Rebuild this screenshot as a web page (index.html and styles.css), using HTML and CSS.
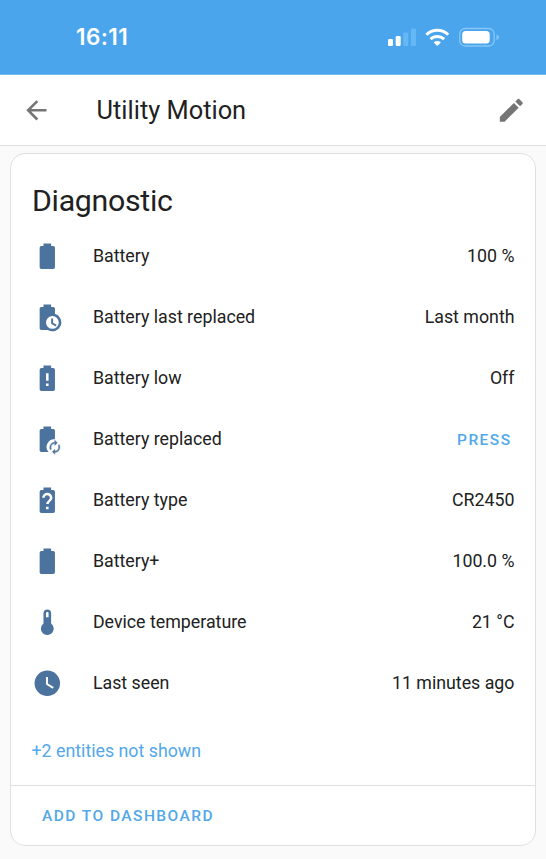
FILE: index.html
```html
<!DOCTYPE html>
<html lang="en">
<head>
<meta charset="utf-8">
<meta name="viewport" content="width=device-width">
<title>Utility Motion</title>
<link rel="stylesheet" href="styles.css">
</head>
<body>
<div class="status">
  <span class="time">16:11</span>
  <svg class="indicators" viewBox="0 0 114 24" aria-hidden="true">
    <g fill="#fff">
      <rect x="0" y="14" width="5" height="7" rx="1.3"/>
      <rect x="7.7" y="11" width="5" height="10" rx="1.3"/>
      <rect x="15.3" y="7.5" width="5" height="13.5" rx="1.3" fill="#66b8f5"/>
      <rect x="23" y="3.5" width="5" height="17.500" rx="1.3" fill="#66b8f5"/>
      <path d="M49.300 21l-3.600-3.600a5.200 5.200 0 0 1 7.200 0z"/>
      <rect x="74.200" y="6" width="27.500" height="12.500" rx="3.500"/>
      <path d="M108.500 9.500v5.500q2.500-.7 2.500-2.750t-2.500-2.750z" fill="#84c7f7"/>
    </g>
    <g fill="none" stroke="#fff" stroke-width="3">
      <path d="M38.400 9.700a15.600 15.600 0 0 1 21.800 0"/>
      <path d="M42.500 14.200a9.900 9.900 0 0 1 13.600 0"/>
    </g>
    <rect x="71.700" y="3.500" width="34.500" height="17.500" rx="5.500" fill="none" stroke="#84c7f7" stroke-width="1.300"/>
  </svg>
</div>
<header class="toolbar">
  <svg class="icon" viewBox="0 0 24 24"><path d="M20,11V13H8L13.500,18.500L12.080,19.920L4.160,12L12.080,4.080L13.500,5.500L8,11H20Z"/></svg>
  <h1>Utility Motion</h1>
  <svg class="icon" viewBox="0 0 24 24"><path d="M20.710,7.040C21.100,6.650 21.100,6 20.710,5.630L18.370,3.290C18,2.900 17.350,2.900 16.960,3.290L15.120,5.120L18.870,8.870M3,17.250V21H6.750L17.810,9.930L14.060,6.180L3,17.250Z"/></svg>
</header>
<main class="card">
  <h2>Diagnostic</h2>
  <div class="rows">
    <div class="row"><svg class="icon" viewBox="0 0 24 24"><path d="M16.670,4H15V2H9V4H7.330A1.330,1.330 0 0,0 6,5.330V20.670C6,21.400 6.600,22 7.330,22H16.670A1.330,1.330 0 0,0 18,20.670V5.330C18,4.600 17.400,4 16.670,4Z"/></svg><span class="name">Battery</span><span class="value">100 %</span></div>
    <div class="row"><svg class="icon" viewBox="0 0 24 24"><path d="M18 9.290V5.330C18 4.600 17.400 4 16.670 4H15V2H9V4H7.330C6.600 4 6 4.600 6 5.330V20.670C6 21.400 6.600 22 7.330 22H12.400A7 7 0 1 0 18 9.290M16 21A5 5 0 1 1 16 11A5 5 0 0 1 16 21M16.500 13H15V17L18.610 19.160L19.360 17.940L16.500 16.250V13Z"/></svg><span class="name">Battery last replaced</span><span class="value">Last month</span></div>
    <div class="row"><svg class="icon" viewBox="0 0 24 24"><path fill-rule="evenodd" d="M13,14H11V8H13ZM13,18H11V16H13ZM16.670,4H15V2H9V4H7.330A1.330,1.330 0 0,0 6,5.330V20.670C6,21.400 6.600,22 7.330,22H16.670A1.330,1.330 0 0,0 18,20.670V5.330C18,4.600 17.400,4 16.670,4Z"/></svg><span class="name">Battery low</span><span class="value">Off</span></div>
    <div class="row"><svg class="icon" viewBox="0 0 24 24"><path d="M18 12V5.330C18 4.600 17.400 4 16.670 4H15V2H9V4H7.330C6.600 4 6 4.600 6 5.330V20.670C6 21.400 6.600 22 7.330 22H13A6 6 0 0 1 18 12Z"/><path class="sync" transform="translate(11.900 12.300) scale(.5)" d="M12,6V9L16,5L12,1V4A8,8 0 0,0 4,12C4,13.570 4.460,15.030 5.240,16.260L6.700,14.800C6.250,13.970 6,13 6,12A6,6 0 0,1 12,6ZM18.760,7.740L17.300,9.200C17.740,10.040 18,11 18,12A6,6 0 0,1 12,18V15L8,19L12,23V20A8,8 0 0,0 20,12C20,10.430 19.540,8.970 18.760,7.740Z"/></svg><span class="name">Battery replaced</span><span class="action">Press</span></div>
    <div class="row"><svg class="icon" viewBox="0 0 24 24"><path fill-rule="evenodd" d="M15.070,12.250L14.170,13.170C13.630,13.710 13.250,14.180 13.090,15H11.050C11.160,14.100 11.560,13.280 12.170,12.670L13.410,11.410C13.780,11.050 14,10.550 14,10C14,8.890 13.100,8 12,8A2,2 0 0,0 10,10H8A4,4 0 0,1 12,6A4,4 0 0,1 16,10C16,10.880 15.640,11.680 15.070,12.250ZM13,19H11V17H13ZM16.670,4H15V2H9V4H7.330A1.330,1.330 0 0,0 6,5.330V20.670C6,21.400 6.600,22 7.330,22H16.670A1.330,1.330 0 0,0 18,20.670V5.330C18,4.600 17.400,4 16.670,4Z"/></svg><span class="name">Battery type</span><span class="value">CR2450</span></div>
    <div class="row"><svg class="icon" viewBox="0 0 24 24"><path d="M16.670,4H15V2H9V4H7.330A1.330,1.330 0 0,0 6,5.330V20.670C6,21.400 6.600,22 7.330,22H16.670A1.330,1.330 0 0,0 18,20.670V5.330C18,4.600 17.400,4 16.670,4Z"/></svg><span class="name">Battery+</span><span class="value">100.0 %</span></div>
    <div class="row"><svg class="icon" viewBox="0 0 24 24"><path fill-rule="evenodd" d="M15 13V5A3 3 0 0 0 9 5V13A5 5 0 1 0 15 13ZM12 4A1 1 0 0 1 13 5V8H11V5A1 1 0 0 1 12 4Z"/></svg><span class="name">Device temperature</span><span class="value">21 °C</span></div>
    <div class="row"><svg class="icon" viewBox="0 0 24 24"><path fill-rule="evenodd" d="M12,2A10,10 0 1,0 12,22A10,10 0 1,0 12,2ZM16.200,16.200L11,13V7H12.500V12.200L17,14.900L16.200,16.200Z"/></svg><span class="name">Last seen</span><span class="value">11 minutes ago</span></div>
  </div>
  <div class="more">+2 entities not shown</div>
  <footer><span class="action">Add to dashboard</span></footer>
</main>
</body>
</html>
```
FILE: styles.css
```css
* { box-sizing: border-box; }

body {
  margin: 0;
  background: #fafafa;
  color: #212121;
  font: 17.8px/24px Roboto, sans-serif;
}

.status {
  height: 75px;
  padding: 0 47px 0 76px;
  display: flex;
  justify-content: space-between;
  align-items: center;
  background: #4ba5ec;
  border-bottom: 1px solid #70bbf0;
}

.time {
  color: #fff;
  font: 600 22.5px/28px Inter, sans-serif;
  letter-spacing: 0.4px;
}

.indicators {
  width: 114px;
  height: 24px;
  margin-right: -3px;
}

.icon {
  display: block;
  flex: none;
  width: 30.6px;
  height: 30.6px;
  fill: #4c739e;
}

.sync {
  stroke: #4c739e;
  stroke-width: 0.6;
}

.toolbar {
  height: 71px;
  padding: 0 19.5px 0 20.5px;
  display: flex;
  align-items: center;
  background: #fff;
  border-bottom: 1px solid #e0e0e0;
}

.toolbar .icon { fill: #757575; }

.toolbar h1 {
  flex: 1;
  margin: 0 0 0 45.5px;
  font-size: 25.4px;
  font-weight: 400;
  line-height: 32px;
}

.card {
  height: 693px;
  margin: 7px 10px 0;
  display: flex;
  flex-direction: column;
  background: #fff;
  border: 1.3px solid #e0e0e0;
  border-radius: 15px;
}

.card h2 {
  margin: 27px 21px 5px;
  font-size: 30.3px;
  font-weight: 400;
  line-height: 40px;
  letter-spacing: -0.3px;
}

.rows { padding: 0 20.500px 0 21px; }

.row {
  height: 61px;
  display: flex;
  align-items: center;
}

.name {
  flex: 1;
  margin-left: 30.3px;
}

.name,
.value {
  padding-bottom: 2px;
}

.action {
  color: #52a8e8;
  font-size: 15.5px;
  font-weight: 500;
  letter-spacing: 1.45px;
  text-transform: uppercase;
}

.row .action { margin-right: 3px; }

.more {
  margin: 25px 20.5px 0;
  color: #52a8e8;
}

footer {
  height: 60px;
  margin-top: auto;
  padding: 0 31px;
  display: flex;
  align-items: center;
  border-top: 1px solid #e0e0e0;
}
```
